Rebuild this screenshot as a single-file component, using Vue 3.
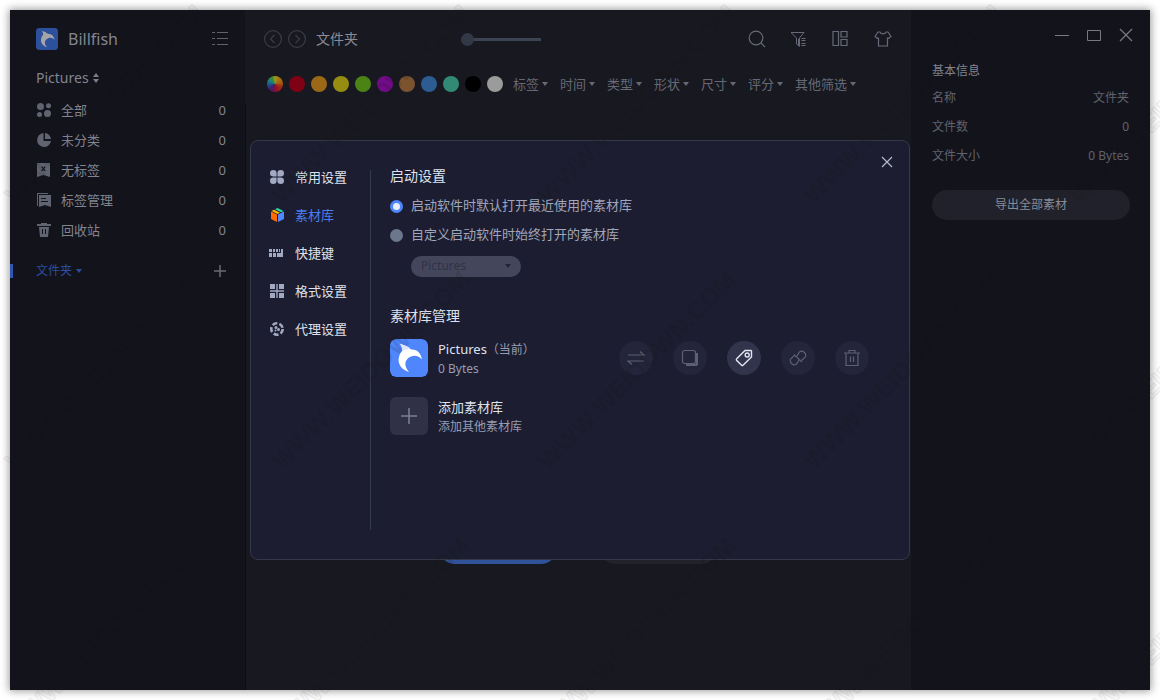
<script setup>
import { ref } from 'vue'

const collections = [
  { icon: 'all', label: '全部', count: 0 },
  { icon: 'pie', label: '未分类', count: 0 },
  { icon: 'untagged', label: '无标签', count: 0 },
  { icon: 'tags', label: '标签管理', count: 0 },
  { icon: 'bin', label: '回收站', count: 0 },
]
const swatches = ['wheel', 'red', 'orange', 'yellow', 'green', 'purple', 'brown', 'blue', 'teal', 'black', 'white']
const filters = ['标签', '时间', '类型', '形状', '尺寸', '评分', '其他筛选']
const tabs = [
  { icon: 'clover', label: '常用设置' },
  { icon: 'cube', label: '素材库' },
  { icon: 'keys', label: '快捷键' },
  { icon: 'format', label: '格式设置' },
  { icon: 'proxy', label: '代理设置' },
]
const activeTab = ref('cube')
const startup = ref('recent')
const zoom = ref(0)
const marks = []
for (let row = 0; row < 3; row++) {
  for (let col = 0; col < 5; col++) {
    marks.push({ id: `${row}-${col}`, x: 16 + col * 266, y: 205 + row * 266, edge: col === 0 || col === 4 || row !== 1 })
  }
}
const edgeMarks = marks.filter((m) => m.edge)
</script>

<template>
  <div class="desktop">
    <svg class="mark mark-outer" aria-hidden="true">
      <text v-for="m in edgeMarks" :key="m.id" :transform="`translate(${m.x} ${m.y}) rotate(-45)`">WWW.WEIDOWN.COM</text>
    </svg>
    <div class="window">
      <aside class="sidebar">
        <header class="brand">
          <svg class="logo" viewBox="0 0 38 38" aria-hidden="true">
            <rect width="38" height="38" rx="6" fill="#2c509c" />
            <path d="M10 5C15 6 19 8 21 10.500C27 10 31 14 32 20.500C29 17 25 16 21 17.500C15 20 13 26 19 33C12 31 7 25 9 18C9.500 15 11 13 12.500 11.500C12.500 9 11.500 7 10 5Z" fill="#a3a5a9" />
          </svg>
          <h1>Billfish</h1>
          <button class="bare" aria-label="列表"><svg width="16" height="14" viewBox="0 0 16 14" fill="none" stroke="#60636e"><path d="M0 .5H3M5 .5H16M0 6.500H3M5 6.500H16M0 12.500H3M5 12.500H16" /></svg></button>
        </header>
        <button class="library bare">Pictures<svg width="6" height="10" viewBox="0 0 6 10" fill="#7b7e88"><path d="M3 0L6 4H0ZM0 6H6L3 10Z" /></svg></button>
        <ul class="collections">
          <li v-for="c in collections" :key="c.icon">
            <a href="#">
              <svg width="16" height="16" viewBox="0 0 16 16" fill="#606470" aria-hidden="true">
                <template v-if="c.icon === 'all'"><circle cx="4.500" cy="4.500" r="3.500" /><circle cx="12.500" cy="3.800" r="2.500" /><circle cx="3.500" cy="12.500" r="2.500" /><circle cx="11.500" cy="11.500" r="3.500" /></template>
                <path v-else-if="c.icon === 'pie'" d="M7.500 1A7 7 0 1 0 15 9H7.500ZM9 1V7H15A6.500 6.500 0 0 0 9 1Z" />
                <path v-else-if="c.icon === 'untagged'" fill-rule="evenodd" d="M1 1H14V15L7.500 13L1 15ZM5 4.500L6.800 6.800L5 9H6.500L7.500 7.700L8.500 9H10L8.200 6.800L10 4.500H8.500L7.500 5.800L6.500 4.500Z" />
                <path v-else-if="c.icon === 'tags'" fill-rule="evenodd" d="M1 1H12V2H2V14H1ZM3 3H15V15L9 13L3 15ZM5 6V7H10V6ZM5 9V10H12V9Z" />
                <path v-else fill-rule="evenodd" d="M5 1H11V2H15V4H1V2H5ZM3 5H13L12 15H4ZM6 7V12H7V7ZM9 7V12H10V7Z" />
              </svg>
              <span>{{ c.label }}</span><span class="count">{{ c.count }}</span>
            </a>
          </li>
        </ul>
        <div class="folders">
          <button class="folder-toggle bare">文件夹<i class="caret"></i></button>
          <button class="bare" aria-label="新建"><svg width="12" height="12" viewBox="0 0 12 12" stroke="#686b75" stroke-width="1.500"><path d="M6 0V12M0 6H12" /></svg></button>
        </div>
      </aside>

      <main class="main">
        <div class="toolbar">
          <button class="bare nav-btn" aria-label="后退"><svg width="18" height="18" viewBox="0 0 18 18" fill="none" stroke="#3a3c48" stroke-width="1.200"><circle cx="9" cy="9" r="8.400" /><path d="M10.500 5L6.500 9L10.500 13" /></svg></button>
          <button class="bare nav-btn" aria-label="前进"><svg width="18" height="18" viewBox="0 0 18 18" fill="none" stroke="#3a3c48" stroke-width="1.200"><circle cx="9" cy="9" r="8.400" /><path d="M7.500 5L11.500 9L7.500 13" /></svg></button>
          <h2>文件夹</h2>
          <input v-model="zoom" class="zoom" type="range" min="0" max="100" aria-label="缩放">
          <div class="tools">
            <button class="bare" aria-label="搜索"><svg width="18" height="18" viewBox="0 0 18 18" fill="none" stroke="#666a78" stroke-width="1.200"><circle cx="8" cy="8" r="6.800" /><path d="M13 13L17 17" /></svg></button>
            <button class="bare" aria-label="筛选"><svg width="18" height="18" viewBox="0 0 18 18" fill="none" stroke="#666a78"><path d="M1 2.500H14L9.500 8V16.500L6.500 14V8L1.500 3M8.500 9V15.500" /><path d="M11.500 8.500H15.500M11.500 10.500H15.500M11.500 13.500H15.500M11.500 15.500H15.500" /></svg></button>
            <button class="bare" aria-label="布局"><svg width="18" height="18" viewBox="0 0 18 18" fill="none" stroke="#666a78" stroke-width="1.200"><path d="M1 1.500H6.500V15.500H1ZM9 1.500H15V7H9ZM9 9.500H15V15.500H9Z" /></svg></button>
            <button class="bare" aria-label="主题"><svg width="18" height="18" viewBox="0 0 18 18" fill="none" stroke="#666a78" stroke-width="1.200" stroke-linejoin="round"><path d="M6 2C7 4.500 11 4.500 12 2H14L17 6.500L14.500 8.500L13.500 8V16H4.500V8L3.500 8.500L1 6.500L4 2Z" /></svg></button>
          </div>
        </div>
        <div class="filterbar">
          <button v-for="s in swatches" :key="s" class="swatch" :class="s" :aria-label="s"></button>
          <div class="filters">
            <button v-for="f in filters" :key="f" class="bare">{{ f }}<i class="caret"></i></button>
          </div>
        </div>
        <div class="canvas">
          <button class="pill blue-pill" aria-label="导入"></button>
          <button class="pill grey-pill" aria-label="新建"></button>
        </div>
      </main>

      <aside class="info">
        <div class="controls">
          <button class="bare" aria-label="最小化"><svg width="14" height="14" viewBox="0 0 14 14" stroke="#777a84"><path d="M0 7.500H14" /></svg></button>
          <button class="bare" aria-label="最大化"><svg width="14" height="14" viewBox="0 0 14 14" fill="none" stroke="#777a84"><path d="M.5 2.500H13.500V12.500H.5Z" /></svg></button>
          <button class="bare" aria-label="关闭"><svg width="14" height="14" viewBox="0 0 14 14" stroke="#777a84" stroke-width="1.200"><path d="M1 1L13 13M13 1L1 13" /></svg></button>
        </div>
        <h3>基本信息</h3>
        <dl>
          <div><dt>名称</dt><dd>文件夹</dd></div>
          <div><dt>文件数</dt><dd>0</dd></div>
          <div><dt>文件大小</dt><dd>0 Bytes</dd></div>
        </dl>
        <button class="export">导出全部素材</button>
      </aside>
    </div>

    <section class="dialog" role="dialog" aria-label="素材库">
      <nav class="tabs">
        <button v-for="t in tabs" :key="t.icon" class="bare" :class="{ active: activeTab === t.icon }" @click="activeTab = t.icon">
          <svg width="16" height="16" viewBox="0 0 16 16" fill="#a2a9c2" aria-hidden="true">
            <path v-if="t.icon === 'clover'" d="M4.300 1A3.300 3.300 0 0 1 7.600 4.300V7.600H4.300A3.300 3.300 0 0 1 4.300 1ZM11.700 1A3.300 3.300 0 0 1 11.700 7.600H8.400V4.300A3.300 3.300 0 0 1 11.700 1ZM4.300 8.400H7.600V11.700A3.300 3.300 0 1 1 4.300 8.400ZM8.400 8.400H11.700A3.300 3.300 0 1 1 8.400 11.700Z" />
            <template v-else-if="t.icon === 'cube'">
              <path d="M2 4.500L8 7.500V15L2 12Z" fill="#ff6a00" /><path d="M9 7.500L15 4.500V12L9 15Z" fill="#5288ff" /><path d="M2.500 4L5 2.700L11 5.800L8.500 7Z" fill="#ffb800" /><path d="M6 2.200L8.500 1L14.500 4L12 5.300Z" fill="#2dd4a5" />
            </template>
            <path v-else-if="t.icon === 'keys'" d="M0 4H3V7H0ZM4 4H6V7H4ZM7 4H9V7H7ZM12 4H14V12H8V8H12ZM0 8H3V12H0ZM4 8H7V12H4ZM10 4H11V7H10Z" />
            <path v-else-if="t.icon === 'format'" d="M1 1H6V6H1ZM7.300 1H8.700V7.300H15V8.700H8.700V15H7.300V8.700H1V7.300H7.300ZM10 1H15V6H10ZM1 10H6V15H1ZM10 10H15V15H10Z" />
            <g v-else><circle cx="8" cy="8" r="5.700" fill="none" stroke="#a2a9c2" stroke-width="2.600" stroke-dasharray="5 2.160" /><circle cx="7" cy="6.500" r="1.500" /><circle cx="9.500" cy="8.500" r="1.500" /><circle cx="6.500" cy="9.500" r="1" /></g>
          </svg>
          {{ t.label }}
        </button>
      </nav>
      <div class="panel">
        <h3>启动设置</h3>
        <label class="choice"><input v-model="startup" type="radio" value="recent" name="startup">启动软件时默认打开最近使用的素材库</label>
        <label class="choice"><input v-model="startup" type="radio" value="custom" name="startup">自定义启动软件时始终打开的素材库</label>
        <div class="select"><select disabled aria-label="素材库"><option>Pictures</option></select><i class="caret"></i></div>

        <h3 class="manage">素材库管理</h3>
        <div class="entry">
          <svg class="thumb" viewBox="0 0 38 38" aria-hidden="true">
            <rect width="38" height="38" rx="6" fill="#5086fb" />
            <path d="M10 5C15 6 19 8 21 10.500C27 10 31 14 32 20.500C29 17 25 16 21 17.500C15 20 13 26 19 33C12 31 7 25 9 18C9.500 15 11 13 12.500 11.500C12.500 9 11.500 7 10 5Z" fill="#fff" />
            <path d="M10 5C15 6 19 8 21 10.500C17 10 14 11 12 13C13 10 11.500 7 10 5Z" fill="#dfe6fb" />
          </svg>
          <div class="words"><strong>Pictures<small>（当前）</small></strong><span>0 Bytes</span></div>
          <div class="actions">
            <button disabled aria-label="切换"><svg viewBox="0 0 18 18"><path d="M1 6H17L13 2.500M17 12H1L5 15.500" /></svg></button>
            <button disabled aria-label="复制"><svg viewBox="0 0 18 18"><rect x="1.500" y="1.500" width="13" height="13" rx="2" /><path stroke-width="2" d="M16 4V15Q16 16 15 16H5" /></svg></button>
            <button class="on" aria-label="重命名"><svg viewBox="0 0 18 18"><path d="M10 1.500L16 1.500L16.500 2V8L8 16.300Q7.300 17 6.600 16.300L1.500 11.200Q1 10.500 1.700 9.800Z" /><circle cx="12.200" cy="6" r="2" /></svg></button>
            <button disabled aria-label="断开"><svg viewBox="0 0 18 18"><path d="M8 7L10.200 3.200A4 4 0 0 1 16.200 8.200L12.800 11.200M5 5.500L13 13M10 11L7.800 14.800A4 4 0 0 1 1.800 9.800L5.200 6.800" /></svg></button>
            <button disabled aria-label="删除"><svg viewBox="0 0 18 18"><path d="M1 4H17M6 4V1.500H12V4M3 4V16.500H15V4M7.500 7.500V13M10.500 7.500V13" /></svg></button>
          </div>
        </div>
        <button class="entry add bare">
          <span class="thumb plus"><svg width="16" height="16" viewBox="0 0 16 16" stroke="#7d8098" stroke-width="1.500"><path d="M8 0V16M0 8H16" /></svg></span>
          <span class="words"><strong>添加素材库</strong><span>添加其他素材库</span></span>
        </button>
      </div>
      <button class="close bare" aria-label="关闭"><svg width="12" height="12" viewBox="0 0 12 12" stroke="#b5b9ca" stroke-width="1.200"><path d="M1 1L11 11M11 1L1 11" /></svg></button>
    </section>

    <svg class="mark mark-inner" aria-hidden="true">
      <text v-for="m in marks" :key="m.id" :transform="`translate(${m.x - 10} ${m.y - 10}) rotate(-45)`">WWW.WEIDOWN.COM</text>
    </svg>
  </div>
</template>

<style>
html, body, #app { height: 100%; }
body { margin: 0; background: #fff; }
</style>

<style scoped>
* { box-sizing: border-box; }
.desktop {
  position: relative;
  display: flex;
  min-height: 100vh;
  padding: 10px;
  overflow: hidden;
  font-family: "Noto Sans", "Noto Sans CJK SC", sans-serif;
  font-size: 13px;
  line-height: 20px;
  color: #82858f;
}
h1, h2, h3, ul, dl, dd { margin: 0; padding: 0; font-weight: 400; }
ul { list-style: none; }
a { color: inherit; text-decoration: none; }
svg { display: block; flex: none; }
button { font: inherit; color: inherit; border: 0; padding: 0; margin: 0; }
.bare { background: none; display: flex; align-items: center; }
.caret { width: 0; height: 0; border: 3px solid transparent; border-top: 4px solid currentColor; border-bottom: 0; }

.window {
  position: relative;
  flex: 1;
  display: grid;
  grid-template-columns: 235px 1fr 239px;
  background: #181820;
  box-shadow: 0 0 8px 1px rgba(0, 0, 0, .4);
}
.sidebar { background: #13131c; padding-top: 16px; }
.brand { display: flex; align-items: center; height: 26px; padding: 0 17px 0 26px; }
.logo { width: 22px; height: 22px; }
h1 { flex: 1; margin-left: 10px; font-size: 16px; line-height: 22px; }
.library { gap: 4px; margin: 16px 0 0 26px; font-size: 14px; }
.collections { margin-top: 7px; }
.collections a { display: flex; align-items: center; height: 30px; padding: 0 19px 0 26px; gap: 9px; }
.count { margin-left: auto; }
.folders { display: flex; justify-content: space-between; align-items: center; height: 14px; margin-top: 19px; padding: 0 19px 0 23px; border-left: 3px solid #2f56b0; }
.folder-toggle { gap: 4px; font-size: 12px; color: #2c4e9c; }

.main { display: flex; flex-direction: column; }
.toolbar { display: flex; align-items: center; height: 58px; padding: 0 19px; }
.nav-btn { margin-right: 6px; }
h2 { margin-left: 4px; font-size: 14px; color: #8a8d97; }
.zoom { appearance: none; width: 80px; height: 14px; margin: 0 0 0 103px; background: linear-gradient(#3c4352, #3c4352) center / 100% 3px no-repeat; }
.zoom::-webkit-slider-thumb { appearance: none; width: 13px; height: 13px; border-radius: 50%; background: #323846; }
.tools { display: flex; gap: 24px; margin-left: auto; }
.filterbar { display: flex; align-items: center; gap: 6px; height: 36px; padding: 0 0 4px 22px; }
.swatch { width: 16px; height: 16px; border-radius: 50%; flex: none; }
.wheel { background: conic-gradient(#a39a1a, #a87a12 30deg, #a85a12 80deg, #a03010 110deg, #a01420 150deg, #701050 190deg, #3a2470 230deg, #205090 265deg, #208080 300deg, #3a8a30 335deg, #a39a1a); }
.red { background: #7f0214; }
.orange { background: #9a6817; }
.yellow { background: #968c12; }
.green { background: #4c8315; }
.purple { background: #720b88; }
.brown { background: #7c532f; }
.blue { background: #2d5c92; }
.teal { background: #328a76; }
.black { background: #000; }
.white { background: #9b9b9b; }
.filters { display: flex; gap: 12px; margin-left: 4px; color: #666975; }
.filters button { gap: 3px; white-space: nowrap; }
.canvas { flex: 1; display: flex; justify-content: center; align-items: flex-end; gap: 42px; padding: 0 2px 126px 0; border-left: 1px solid #0d0d13; }
.pill { width: 118px; height: 32px; border-radius: 16px; }
.blue-pill { background: #30529b; }
.grey-pill { background: #22222c; }

.info { background: #13131c; padding: 16px 20px 0 21px; font-size: 12px; color: #60636e; }
.controls { display: flex; justify-content: flex-end; gap: 18px; height: 18px; margin-right: -3px; }
.info h3 { margin: 17px 0 2px; font-size: 12px; line-height: 20px; color: #82858f; }
dl div { display: flex; justify-content: space-between; height: 29px; align-items: center; padding-right: 1px; }
.export { width: 100%; height: 30px; margin-top: 20px; border-radius: 15px; background: #21212b; color: #888b95; }

.dialog {
  position: absolute;
  top: 50%;
  left: 50%;
  width: 660px;
  height: 420px;
  transform: translate(-50%, -50%);
  display: flex;
  border: 1px solid #343847;
  border-radius: 8px;
  background: #1c1d30;
  color: #dfe2ee;
}
.tabs { width: 120px; margin: 29px 0; border-right: 1px solid #363a4d; }
.tabs button { width: 100%; height: 38px; padding-left: 18px; gap: 10px; }
.tabs button:first-child { margin-top: -12px; }
.tabs .active { color: #4b7ff0; }
.panel { flex: 1; padding: 25px 40px 0 19px; }
.panel h3 { font-size: 14px; line-height: 20px; }
.choice { display: flex; align-items: center; gap: 8px; height: 29px; color: #a1a6ba; }
.panel h3 + .choice { margin-top: 4px; }
.choice input { appearance: none; width: 13px; height: 13px; margin: 4px 0 0; border-radius: 50%; background: #6c768c; }
.choice input:checked { background: #e9effd; border: 3px solid #5086fb; }
.select { position: relative; width: 110px; height: 21px; margin: 7px 0 0 21px; color: #22243a; }
.select select { appearance: none; width: 100%; height: 21px; padding: 0 10px; border: 0; border-radius: 11px; background: #44475c; color: #303246; font: inherit; font-size: 12px; opacity: 1; }
.select .caret { position: absolute; right: 10px; top: 9px; }
.panel .manage { margin: 30px 0 13px; }
.entry { display: flex; align-items: center; width: 100%; height: 38px; text-align: left; }
.thumb { width: 38px; height: 38px; flex: none; border-radius: 6px; }
.plus { display: flex; align-items: center; justify-content: center; background: #303146; }
.words { display: flex; flex-direction: column; margin-left: 10px; padding-top: 2px; font-size: 12px; line-height: 19px; color: #979cb1; }
.words strong { font-weight: 400; font-size: 13px; color: #dfe2ee; }
.words small { font-size: 12px; color: #979cb1; }
.add { margin-top: 20px; }
.actions { display: flex; gap: 20px; margin-left: auto; }
.actions button { display: flex; align-items: center; justify-content: center; width: 34px; height: 34px; border-radius: 50%; background: #24253a; }
.actions svg { width: 18px; height: 18px; fill: none; stroke: #5d6075; stroke-width: 1.2; }
.actions .on { background: #32344c; }
.actions .on svg { stroke: #e4e7f2; stroke-width: 1.4; }
.close { position: absolute; top: 15px; right: 16px; }

.mark { position: absolute; pointer-events: none; font: bold 25px/1 "Liberation Sans", sans-serif; }
.mark-outer { top: 0; left: 0; width: 100%; height: 100%; fill: #fcfcfc; stroke: #ededed; }
.mark-inner { top: 10px; left: 10px; width: calc(100% - 20px); height: calc(100% - 20px); fill: rgba(18, 20, 14, .12); }
</style>
